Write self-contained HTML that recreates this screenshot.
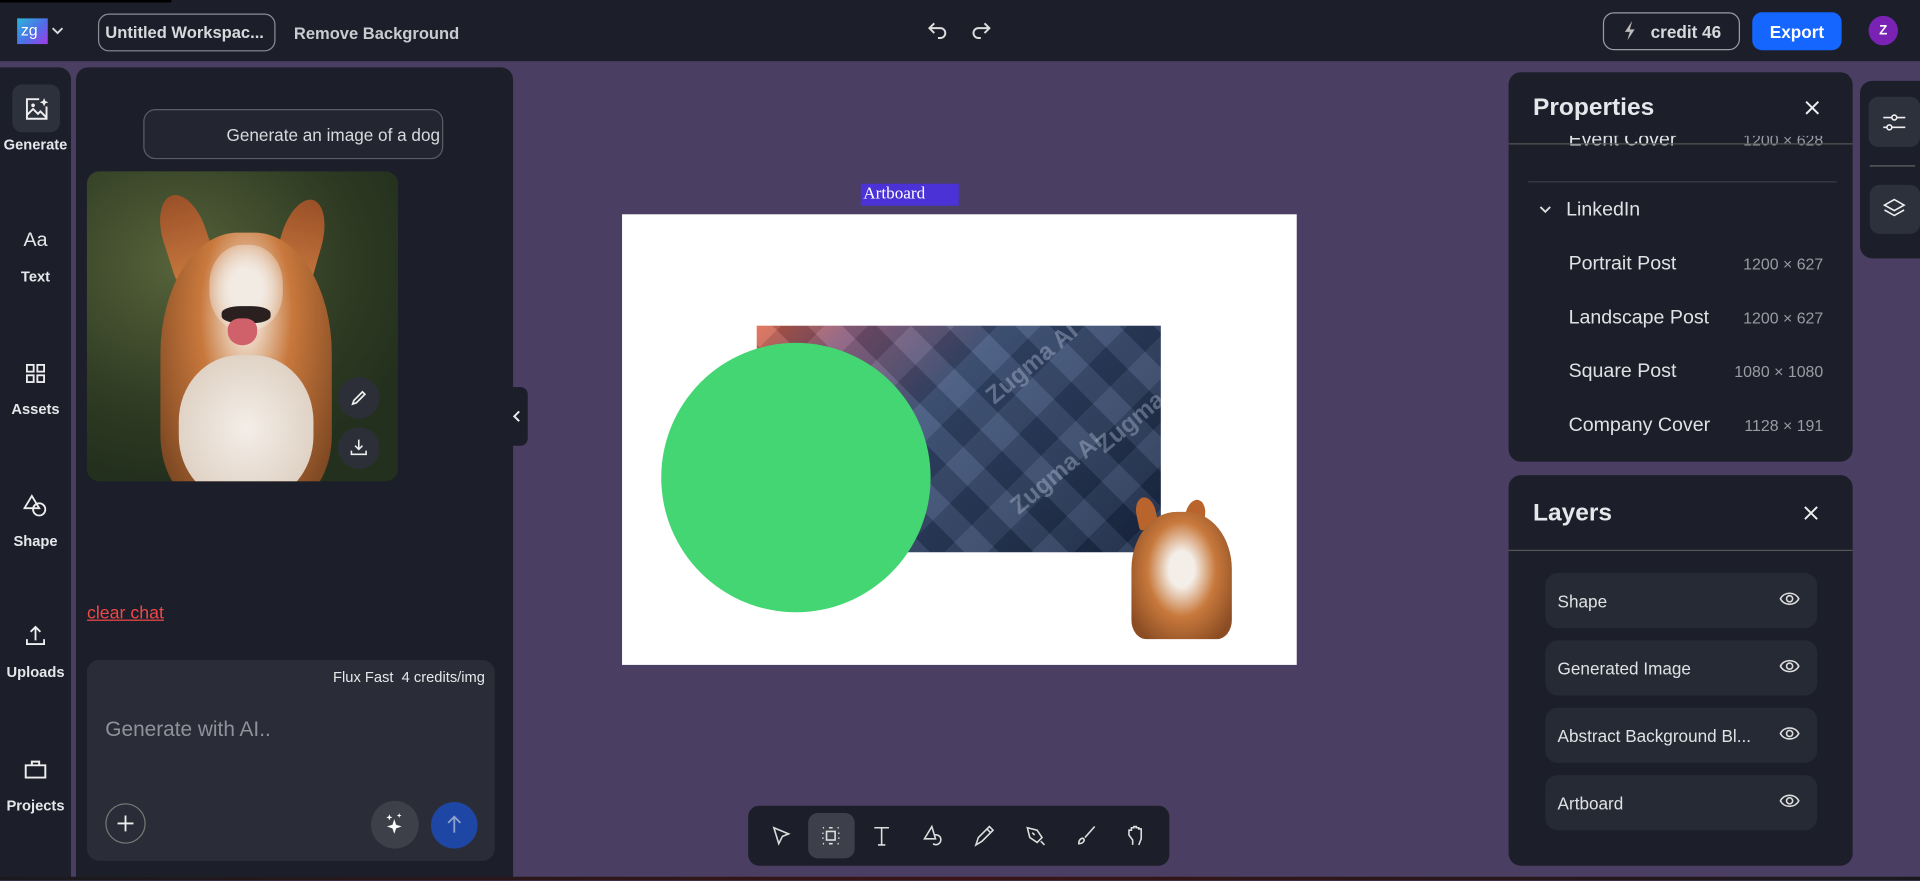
<!DOCTYPE html>
<html><head><meta charset="utf-8"><style>
*{box-sizing:border-box;margin:0;padding:0;white-space:nowrap}
html,body{width:1920px;height:881px;overflow:hidden;background:#4a3f63;font-family:"Liberation Sans",sans-serif}
#w{position:absolute;left:0;top:0;width:1568px;height:719px;transform:scale(1.22449);transform-origin:0 0;background:#4a3f63;color:#e6e7ea}
.a{position:absolute}
.top{left:0;top:0;width:1568px;height:50px;background:#1c1f2a}
.rail{left:0;top:55px;width:58px;height:664px;background:#1c1f2a;border-radius:0 10px 0 0}
.ri{position:absolute;left:0;width:58px;text-align:center;font-size:12px;font-weight:bold;color:#e6e7ea}
.panel{left:62px;top:55px;width:357px;height:664px;background:#1c1f2a;border-radius:10px 10px 0 0}
.card{background:#1c1f2a;border-radius:10px}
.row{position:absolute;left:0;width:281px;font-size:16px;color:#e0e1e4}
.row .n{position:absolute;left:49px}
.row .s{position:absolute;right:24px;font-size:13px;color:#9a9ca3}
.lay{position:absolute;left:30px;width:222px;height:45px;background:#262a35;border-radius:10px;font-size:14px;color:#e0e1e4;padding:15px 0 0 10px}
.lay svg{position:absolute;right:14px;top:14px}
svg{display:block}
</style></head><body><div id="w">
<div class="a top"></div>
<div class="a" style="left:0;top:0;width:140px;height:2px;background:#000"></div>
<div class="a" style="left:14px;top:15px;width:25px;height:21px;background:linear-gradient(135deg,#2ab6d9,#4f6ee8 55%,#a33be8);color:#fff;font-size:13px;padding:2px 0 0 3px">zg</div>
<svg class="a" style="left:41px;top:19px" width="12" height="12" viewBox="0 0 12 12"><path d="M2 4l4 4 4-4" stroke="#ddd" stroke-width="1.5" fill="none"/></svg>
<div class="a" style="left:80px;top:11px;width:145px;height:31px;border:1px solid #8a8d96;border-radius:9px;font-size:13.5px;font-weight:bold;color:#d8d9dc;padding:7px 0 0 5px;overflow:hidden">Untitled Workspac...</div>
<div class="a" style="left:240px;top:20px;font-size:13.5px;font-weight:bold;color:#c9cbd0">Remove Background</div>
<svg class="a" style="left:757px;top:16px" width="18" height="18" viewBox="0 0 18 18"><path d="M6 3L2 7l4 4M2 7h9a4 4 0 010 8H9" stroke="#ddd" stroke-width="1.6" fill="none"/></svg>
<svg class="a" style="left:792px;top:16px" width="18" height="18" viewBox="0 0 18 18"><path d="M12 3l4 4-4 4M16 7H7a4 4 0 000 8h2" stroke="#ddd" stroke-width="1.6" fill="none"/></svg>
<div class="a" style="left:1309px;top:10px;width:112px;height:31px;border:1px solid #9a9ca3;border-radius:9px;font-size:14px;font-weight:bold;color:#d8d9dc;padding:7px 0 0 38px">credit 46</div>
<svg class="a" style="left:1325px;top:16px" width="12" height="18" viewBox="0 0 12 18"><path d="M8 1L2 10h4l-2 7 6-9H6z" fill="#bbb"/></svg>
<div class="a" style="left:1431px;top:10px;width:73px;height:31px;background:#1565ff;border-radius:8px;font-size:14px;font-weight:bold;color:#fff;text-align:center;padding-top:8px">Export</div>
<div class="a" style="left:1526px;top:13px;width:24px;height:24px;border-radius:50%;background:#7a22b3;color:#fff;font-size:11px;font-weight:bold;text-align:center;padding-top:6px">Z</div>

<div class="a rail"></div>
<div class="a" style="left:10px;top:69px;width:39px;height:39px;background:#2d313c;border-radius:8px"></div>
<svg class="a" style="left:20px;top:79px" width="20" height="20" viewBox="0 0 20 20"><path d="M12 2H2v16h16V8M2 15l5-5 4 4 2-2 5 5" stroke="#eee" stroke-width="1.6" fill="none"/><circle cx="7" cy="7" r="1.5" fill="#eee"/><path d="M16 1l1 2.5 2.5 1-2.5 1-1 2.5-1-2.5-2.5-1 2.5-1z" fill="#eee"/></svg>
<div class="ri" style="top:111px">Generate</div>
<div class="ri" style="top:188px;font-size:16px;font-weight:normal">Aa</div>
<div class="ri" style="top:219px">Text</div>
<svg class="a" style="left:21px;top:297px" width="16" height="16" viewBox="0 0 16 16"><g stroke="#eee" stroke-width="1.5" fill="none"><rect x="1" y="1" width="5.5" height="5.5"/><rect x="9.5" y="1" width="5.5" height="5.5"/><rect x="1" y="9.5" width="5.5" height="5.5"/><rect x="9.5" y="9.5" width="5.5" height="5.5"/></g></svg>
<div class="ri" style="top:327px">Assets</div>
<svg class="a" style="left:19px;top:403px" width="20" height="20" viewBox="0 0 20 20"><g stroke="#eee" stroke-width="1.5" fill="none"><path d="M7 2L1 12h12z"/><circle cx="13" cy="13" r="5"/></g></svg>
<div class="ri" style="top:435px">Shape</div>
<svg class="a" style="left:20px;top:510px" width="18" height="18" viewBox="0 0 18 18"><path d="M9 13V2M5 6l4-4 4 4M2 12v4h14v-4" stroke="#eee" stroke-width="1.5" fill="none"/></svg>
<div class="ri" style="top:542px">Uploads</div>
<svg class="a" style="left:20px;top:620px" width="18" height="16" viewBox="0 0 18 16"><path d="M1 5h16v10H1zM6 5V2h6v3" stroke="#eee" stroke-width="1.6" fill="none"/></svg>
<div class="ri" style="top:651px">Projects</div>

<div class="a panel"></div>
<div class="a" style="left:117px;top:89px;width:245px;height:41px;border:1px solid #5a5d66;border-radius:10px;background:#232631;font-size:14px;color:#d8d9dc;padding:12px 0 0 67px">Generate an image of a dog</div>
<div class="a" style="left:71px;top:140px;width:254px;height:253px;border-radius:10px;overflow:hidden;background:radial-gradient(ellipse 80% 70% at 30% 30%,#56633a,#2e3a22 70%,#23301d)">
 <div class="a" style="left:62px;top:18px;width:36px;height:70px;background:linear-gradient(#9a5028,#c8783e);transform:rotate(-18deg);border-radius:50% 50% 10% 10%"></div>
 <div class="a" style="left:158px;top:22px;width:34px;height:70px;background:linear-gradient(#9a5028,#c8783e);transform:rotate(16deg);border-radius:50% 50% 10% 10%"></div>
 <div class="a" style="left:60px;top:50px;width:140px;height:220px;border-radius:45% 45% 25% 25%;background:radial-gradient(ellipse at 50% 30%,#f0e0d0 8%,#c8783c 38%,#9a5a2c 70%,#6a3c1c 100%)"></div>
 <div class="a" style="left:75px;top:150px;width:110px;height:120px;border-radius:45%;background:radial-gradient(#f4eee8,#d8c8b8)"></div>
 <div class="a" style="left:100px;top:60px;width:60px;height:70px;border-radius:45%;background:radial-gradient(#f2ebe4 30%,rgba(240,230,220,0))"></div>
 <div class="a" style="left:110px;top:110px;width:40px;height:14px;border-radius:40%;background:#2a2020"></div>
 <div class="a" style="left:115px;top:120px;width:24px;height:22px;border-radius:40% 40% 50% 50%;background:#d0606a"></div>
</div>
<div class="a" style="left:276px;top:308px;width:34px;height:34px;border-radius:50%;background:#2c2f38"></div>
<svg class="a" style="left:286px;top:318px" width="14" height="14" viewBox="0 0 14 14"><path d="M2 12l1-3 7-7 2 2-7 7z" stroke="#eee" stroke-width="1.4" fill="none"/></svg>
<div class="a" style="left:276px;top:349px;width:34px;height:34px;border-radius:50%;background:#2c2f38"></div>
<svg class="a" style="left:286px;top:358px" width="14" height="14" viewBox="0 0 14 14"><path d="M7 1v8M4 6l3 3 3-3M1 10v3h12v-3" stroke="#eee" stroke-width="1.3" fill="none"/></svg>
<div class="a" style="left:71px;top:493px;font-size:14.5px;color:#f04848;text-decoration:underline">clear chat</div>
<div class="a" style="left:71px;top:539px;width:333px;height:164px;background:#2a2d37;border-radius:10px"></div>
<div class="a" style="left:272px;top:546px;font-size:12px;color:#e6e7ea">Flux Fast&nbsp; 4 credits/img</div>
<div class="a" style="left:86px;top:586px;font-size:17px;color:#8f929a">Generate with AI..</div>
<div class="a" style="left:86px;top:656px;width:33px;height:33px;border-radius:50%;border:1px solid #777"></div>
<svg class="a" style="left:94px;top:664px" width="17" height="17" viewBox="0 0 17 17"><path d="M8.5 2v13M2 8.5h13" stroke="#eee" stroke-width="1.5"/></svg>
<div class="a" style="left:303px;top:654px;width:39px;height:39px;border-radius:50%;background:#3e4049"></div>
<svg class="a" style="left:313px;top:663px" width="20" height="20" viewBox="0 0 20 20"><path d="M9 6l1.5 4.5L15 12l-4.5 1.5L9 18l-1.5-4.5L3 12l4.5-1.5z M5 2l.7 1.8L7.5 4.5 5.7 5.2 5 7 4.3 5.2 2.5 4.5 4.3 3.8z M13 1l.5 1.5L15 3l-1.5.5L13 5l-.5-1.5L11 3l1.5-.5z" fill="#fff"/></svg>
<div class="a" style="left:352px;top:655px;width:38px;height:38px;border-radius:50%;background:#1e47a5"></div>
<svg class="a" style="left:362px;top:664px" width="18" height="18" viewBox="0 0 18 18"><path d="M9 16V3M4 8l5-5 5 5" stroke="#8ea1cc" stroke-width="1.5" fill="none"/></svg>
<div class="a" style="left:418px;top:316px;width:13px;height:48px;background:#1c1f2a;border-radius:0 6px 6px 0"></div>
<svg class="a" style="left:417px;top:334px" width="10" height="12" viewBox="0 0 10 12"><path d="M7 2L3 6l4 4" stroke="#eee" stroke-width="1.6" fill="none"/></svg>

<!-- canvas -->
<div class="a" style="left:703px;top:150px;width:80px;height:18px;background:#4b32d6;color:#fff;font-family:'Liberation Serif',serif;font-size:14px;padding:1px 0 0 2px">Artboard</div>
<div class="a" style="left:508px;top:175px;width:551px;height:368px;background:#fff"></div>
<div class="a" style="left:618px;top:266px;width:330px;height:185px;background:linear-gradient(135deg,#e0684a 0%,#8a5a7a 15%,#3a5078 40%,#2c3e60 70%,#1a2a48 100%);overflow:hidden">
 <div class="a" style="left:0;top:0;width:100%;height:100%;background:repeating-linear-gradient(45deg,rgba(255,255,255,.06) 0 20px,rgba(0,0,0,.12) 20px 40px),repeating-linear-gradient(-45deg,rgba(255,255,255,.05) 0 25px,rgba(0,0,0,.1) 25px 50px)"></div>
 <div class="a" style="left:180px;top:20px;color:rgba(200,210,230,.35);font-weight:bold;font-size:20px;transform:rotate(-40deg)">Zugma AI</div>
 <div class="a" style="left:200px;top:110px;color:rgba(200,210,230,.35);font-weight:bold;font-size:20px;transform:rotate(-40deg)">Zugma AI</div>
 <div class="a" style="left:270px;top:60px;color:rgba(200,210,230,.35);font-weight:bold;font-size:20px;transform:rotate(-40deg)">Zugma AI</div>
</div>
<div class="a" style="left:540px;top:280px;width:220px;height:220px;border-radius:50%;background:#44d672"></div>
<div class="a" style="left:928px;top:406px;width:16px;height:26px;background:#b8642c;border-radius:50% 50% 10% 10%;transform:rotate(-12deg)"></div>
<div class="a" style="left:968px;top:408px;width:16px;height:26px;background:#b8642c;border-radius:50% 50% 10% 10%;transform:rotate(12deg)"></div>
<div class="a" style="left:924px;top:418px;width:82px;height:104px;border-radius:45% 45% 15% 15%;background:radial-gradient(ellipse at 50% 45%,#f4eee8 18%,#c8793c 48%,#8c4d24 85%)"></div>

<!-- toolbar -->
<div class="a" style="left:611px;top:658px;width:344px;height:49px;background:#1c1f2a;border-radius:9px"></div>
<div class="a" style="left:660px;top:664px;width:38px;height:37px;background:#3d404a;border-radius:8px"></div>
<svg class="a" style="left:611px;top:658px" width="344" height="49" viewBox="0 0 344 49"><g stroke="#ddd" stroke-width="1.3" fill="none">
<path d="M21 18l12 5-5 2-3 6z"/>
<rect x="64" y="21" width="7" height="7"/><path d="M61 18h1M66 18h3M73 18h1M61 31h1M66 31h3M73 31h1M61 22v1M61 26v1M74 22v1M74 26v1" />
<path d="M103 18h12M109 18v14M106 32h6"/>
<path d="M150 17l-6 10h9zM152 24a4 4 0 11-1 7"/>
<path d="M186 32l2-6 9-9 3 3-9 9zM195 19l3 3"/>
<path d="M228 18l8 2 4 6-4 4-6-4zM232 22l2 2M239 29l3 3"/>
<path d="M270 31c0-4 3-5 4-4s0 4-4 4zM275 26l8-9"/>
<path d="M314 32v-4l-3-4v-4h2v-2h2v-1h2v1h2v1h2v8l-2 5v0"/>
</g></svg>

<!-- properties -->
<div class="a card" style="left:1232px;top:59px;width:281px;height:318px;overflow:hidden">
 <div class="a" style="left:20px;top:18px;font-size:20px;font-weight:bold;color:#e6e7ea">Properties</div>
 <svg class="a" style="left:241px;top:22px" width="14" height="14" viewBox="0 0 14 14"><path d="M2 2l10 10M12 2L2 12" stroke="#eee" stroke-width="1.6"/></svg>
 <div class="row" style="top:52px;height:14px;overflow:hidden"><span class="n" style="top:-5px">Event Cover</span><span class="s" style="top:-4px">1200 × 628</span></div>
 <div class="a" style="left:0;top:58px;width:281px;height:1px;background:#555"></div>
 <div class="a" style="left:16px;top:89px;width:252px;height:1px;background:#3a3d46"></div>
 <svg class="a" style="left:24px;top:107px" width="12" height="10" viewBox="0 0 12 10"><path d="M2 3l4 4 4-4" stroke="#ddd" stroke-width="1.5" fill="none"/></svg>
 <div class="a" style="left:47px;top:104px;font-size:16px;color:#e0e1e4">LinkedIn</div>
 <div class="row" style="top:148px"><span class="n">Portrait Post</span><span class="s" style="top:1px">1200 × 627</span></div>
 <div class="row" style="top:192px"><span class="n">Landscape Post</span><span class="s" style="top:1px">1200 × 627</span></div>
 <div class="row" style="top:236px"><span class="n">Square Post</span><span class="s" style="top:1px">1080 × 1080</span></div>
 <div class="row" style="top:280px"><span class="n">Company Cover</span><span class="s" style="top:1px">1128 × 191</span></div>
</div>
<!-- layers -->
<div class="a card" style="left:1232px;top:388px;width:281px;height:319px">
 <div class="a" style="left:20px;top:20px;font-size:20px;font-weight:bold;color:#e6e7ea">Layers</div>
 <svg class="a" style="left:240px;top:24px" width="14" height="14" viewBox="0 0 14 14"><path d="M2 2l10 10M12 2L2 12" stroke="#eee" stroke-width="1.6"/></svg>
 <div class="a" style="left:0;top:61px;width:281px;height:1px;background:#555"></div>
 <div class="lay" style="top:80px">Shape<svg width="17" height="14" viewBox="0 0 17 14"><path d="M1 7c3-6 12-6 15 0-3 6-12 6-15 0z" stroke="#ddd" stroke-width="1.3" fill="none"/><circle cx="8.5" cy="7" r="2.5" stroke="#ddd" stroke-width="1.3" fill="none"/></svg></div>
 <div class="lay" style="top:135px">Generated Image<svg width="17" height="14" viewBox="0 0 17 14"><path d="M1 7c3-6 12-6 15 0-3 6-12 6-15 0z" stroke="#ddd" stroke-width="1.3" fill="none"/><circle cx="8.5" cy="7" r="2.5" stroke="#ddd" stroke-width="1.3" fill="none"/></svg></div>
 <div class="lay" style="top:190px">Abstract Background Bl...<svg width="17" height="14" viewBox="0 0 17 14"><path d="M1 7c3-6 12-6 15 0-3 6-12 6-15 0z" stroke="#ddd" stroke-width="1.3" fill="none"/><circle cx="8.5" cy="7" r="2.5" stroke="#ddd" stroke-width="1.3" fill="none"/></svg></div>
 <div class="lay" style="top:245px">Artboard<svg width="17" height="14" viewBox="0 0 17 14"><path d="M1 7c3-6 12-6 15 0-3 6-12 6-15 0z" stroke="#ddd" stroke-width="1.3" fill="none"/><circle cx="8.5" cy="7" r="2.5" stroke="#ddd" stroke-width="1.3" fill="none"/></svg></div>
</div>
<!-- right rail -->
<div class="a" style="left:1519px;top:66px;width:49px;height:145px;background:#1c1f2a;border-radius:10px 0 0 10px"></div>
<div class="a" style="left:1526px;top:79px;width:42px;height:41px;background:#2d313c;border-radius:8px"></div>
<svg class="a" style="left:1537px;top:90px" width="20" height="20" viewBox="0 0 20 20"><g stroke="#eee" stroke-width="1.3" fill="none"><path d="M1 6h7M12 6h7M1 14h3M8 14h11"/><circle cx="10" cy="6" r="2"/><circle cx="6" cy="14" r="2"/></g></svg>
<div class="a" style="left:1527px;top:135px;width:37px;height:1px;background:#666"></div>
<div class="a" style="left:1527px;top:151px;width:41px;height:40px;background:#2d313c;border-radius:8px"></div>
<svg class="a" style="left:1537px;top:161px" width="20" height="20" viewBox="0 0 20 20"><g stroke="#eee" stroke-width="1.3" fill="none"><path d="M10 2l8 4.5-8 4.5-8-4.5z"/><path d="M2 10.5l8 4.5 8-4.5"/></g></svg>
<div class="a" style="left:0;top:716px;width:1568px;height:3px;background:linear-gradient(90deg,#1a1a1e,#3a1418 50%,#1a1a1e)"></div>
</div></body></html>
